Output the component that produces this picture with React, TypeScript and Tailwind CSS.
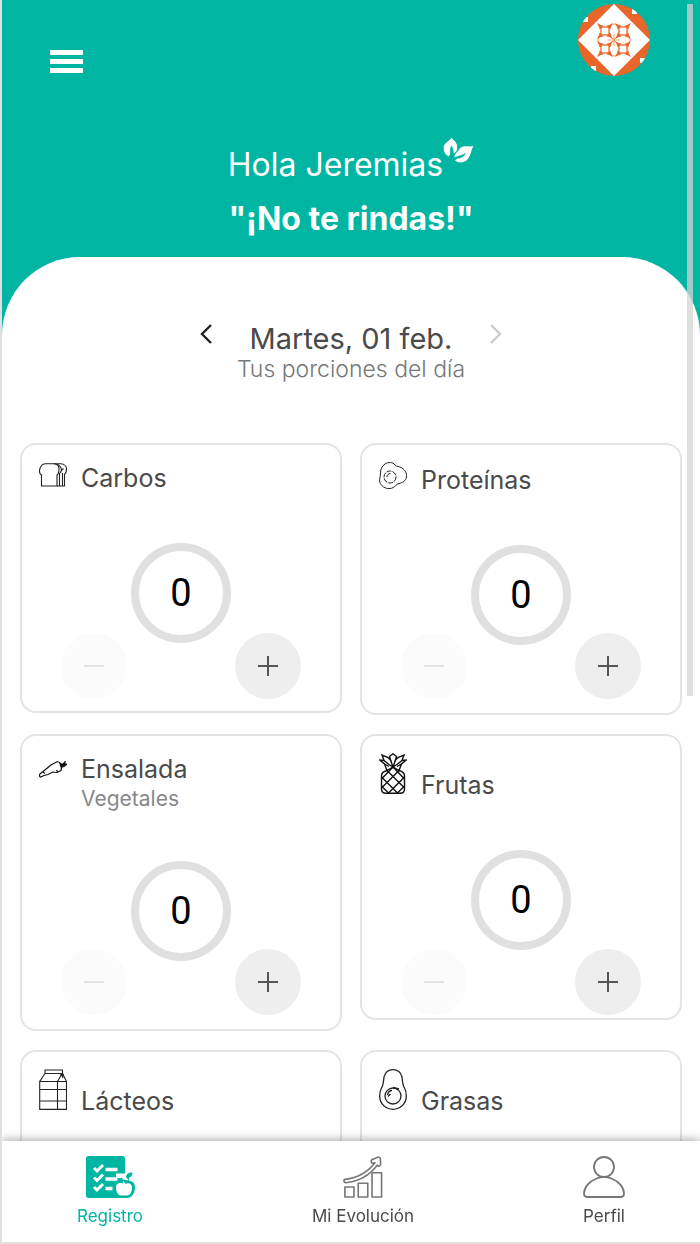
import React, { useState } from 'react';

interface IconProps {
  className?: string;
}

const LeafIcon: React.FC<IconProps> = ({ className }) => (
  <svg viewBox="0 0 31 26" className={className} fill="currentColor" aria-hidden="true">
    <path d="M9 .5C9.500 3 13 4 14 8C14.400 10 14.200 12 13.500 14L11 16.500L10.500 14.500L9 8.500L7.300 10.500L7 17.500L5.500 19.500C2 17.500 .3 14 .6 10C1.500 5.500 6.500 4 9 .5Z" />
    <path d="M30.500 9C28 12 28.500 19 23.500 23.500C20 26 15.500 26 12 23.500L14.500 21.500C18.500 21.500 21.500 19.500 23 16C19.500 18 16 18.500 12.500 20L11.200 19.500C12 17 14 15 15.500 13.500C17 10 20 9 23.500 9.300C26 9.500 28 9.500 30.500 9Z" />
  </svg>
);

const Avatar: React.FC = () => (
  <svg viewBox="0 0 72 72" className="size-full" role="img" aria-label="Jeremias">
    <rect width="72" height="72" fill="#e8662a" />
    <path d="M36 0L72 36L36 72L0 36Z" fill="#fff" />
    <path d="M54 4L59 4V10H54ZM4 13H10V18H4ZM62 54H68V59H62ZM13 62H18V68H13Z" fill="#fff" />
    <g fill="none" stroke="#f0925f" strokeWidth=".9">
      <path d="M32 22A5 5 0 0 1 40 22M32 50A5 5 0 0 0 40 50M22 32A5 5 0 0 0 22 40M50 32A5 5 0 0 1 50 40" />
      <path d="M32 32L40 40M40 32L32 40M30 36H42M36 30V42" />
    </g>
    {[[27, 27], [45, 27], [27, 45], [45, 45]].map(([x, y]) => (
      <g key={`${x}-${y}`} transform={`translate(${x} ${y})`} fill="#e8662a">
        <rect x="-4" y="-4" width="8" height="8" fill="none" stroke="#e8662a" strokeWidth="1.300" />
        <path d="M-8-8L-2-5L-5-2ZM8-8L2-5L5-2ZM8 8L2 5L5 2ZM-8 8L-2 5L-5 2Z" />
        <path d="M-5.500-5.500H-1.500L-5.500-1.500ZM5.500-5.500V-1.500L1.500-5.500ZM5.500 5.500H1.500L5.500 1.500ZM-5.500 5.500V1.500L-1.500 5.500Z" />
      </g>
    ))}
  </svg>
);

const BreadIcon: React.FC = () => (
  <svg viewBox="0 0 28 24" className="h-6 w-7" fill="none" stroke="#222" strokeWidth="1.100" aria-hidden="true">
    <path d="M2.500 23V12C.5 11 .3 8 .8 6C1.800 3 4 1 6 .8H15C18 1 20 3 20 6C20 9 19.500 11 18 12V23Z" />
    <path d="M15 .8H22C25 1 27.500 3 27.500 6C27.500 9 27 10.500 25.500 11.500V23H18M18 1.500C21 2.500 22.500 4 22.500 7.500L20.500 11V23M23.500 10V23M22 7.500L24.500 5.500" />
  </svg>
);

const EggIcon: React.FC = () => (
  <svg viewBox="0 0 28 27" className="h-[27px] w-7" fill="none" stroke="#222" strokeWidth="1" aria-hidden="true">
    <path d="M6 2C9 0 14-.2 16 3C18 5 20 4 23 6C26 8 28 11 27.500 15C27 19 23 21 20 21.500C17 22 16 26 11 26.500C6 27 2 24 .8 20C0 17 1.500 15 1.500 11C1.500 7 3 4 6 2Z" />
    <circle cx="11" cy="15" r="6" strokeDasharray="5 1" />
    <path d="M8 15C8 13 9.500 11.500 11.500 11.500" />
  </svg>
);

const CarrotIcon: React.FC = () => (
  <svg viewBox="0 0 28 17" className="h-[17px] w-7" fill="none" stroke="#111" strokeWidth="1.200" aria-hidden="true">
    <path d="M1.500 16C0 15.500 .2 13.500 1.500 12.500L12 4L18 .8C20 .5 22 2.500 23 5L22 9.500L18 11.500L14 11L9 13.500L5 14.500Z" />
    <path d="M4 11L6 12.500M18.500 11L17.500 9" />
    <path d="M21 2.500L23.500 3.500L26 .8L25.500 3L28 3L25 5.500L22 6Z" fill="#111" />
  </svg>
);

const PineappleIcon: React.FC = () => (
  <svg viewBox="0 0 28 41" className="h-[41px] w-7" fill="none" stroke="#111" strokeWidth="1.400" aria-hidden="true">
    <path d="M8 17.500C4 18.500 2.500 20 2.500 23V36C2.500 39 4 40.300 7 40.300H21C24 40.300 25.500 39 25.500 36V23C25.500 20 24 18.500 20 17.500" />
    <path d="M8 17.500L5.500 11L.8 7L5 7.500L3 2L9 4.500L11.500 7L10.500 3.500L14 .8L17.500 3.500L16.500 7L19 4.500L25 2L23 7.500L27.200 7L22.500 11L20 17.500L14 14Z" />
    <path d="M5 7.500L10 11.500L14 14L18 11.500L23 7.500M11.500 7L14 14L16.500 7M5.500 11L10 13.500M22.500 11L18 13.500" />
    <path d="M14 14L2.500 26M8 17.500L25.500 35M2.500 24L18.500 40M14 14L25.500 26M20 17.500L2.500 35M25.500 24L9.500 40M2.500 33L9.500 40M25.500 33L18.500 40" />
  </svg>
);

const MilkIcon: React.FC = () => (
  <svg viewBox="0 0 28 41" className="h-[41px] w-7" fill="none" stroke="#222" strokeWidth="1.100" aria-hidden="true">
    <path d="M6 1H23.500V4.500H6ZM6 4.500L.7 12.500V40.400H27.500V12.500L23.500 4.500M.7 12.500H18.500L23 4.500M18.500 12.500V40.400M18.500 12.500H27.500M.7 20.500H27.500M.7 32H27.500M22.500 5L24 9" />
    <circle cx="23" cy="5.500" r="1" fill="#111" />
  </svg>
);

const AvocadoIcon: React.FC = () => (
  <svg viewBox="0 0 28 41" className="h-[41px] w-7" fill="none" stroke="#222" strokeWidth="1.300" aria-hidden="true">
    <path d="M14 .7C9 .7 6 4 5 8C4.500 12 4.500 16 2.500 19C1 21.500 .7 24 .7 27C.7 35 7 40.300 14 40.300C21 40.300 27.300 35 27.300 27C27.300 24 27 21.500 25.500 19C23.500 16 23.500 12 23 8C22 4 19 .7 14 .7Z" />
    <circle cx="14" cy="27" r="8" />
    <path d="M8.500 26C9 23.500 11 21.500 13 21.500M9 27.500L11.500 25M14 18.500L20 20" />
  </svg>
);

const ChecklistIcon: React.FC = () => (
  <svg viewBox="0 0 49 42" className="h-[42px] w-[49px]" fill="none" aria-hidden="true">
    <path d="M2.500 0H36.500C38 0 39 1 39 2.500V17.500H30V42H2.500C1 42 0 41 0 39.500V2.500C0 1 1 0 2.500 0Z" fill="currentColor" />
    <path d="M40 22C40 18 42 16.500 46.500 16.500C46.500 19 45.500 20.500 43 22V25C47 24.500 49 27.500 49 31.500C49 37 45.500 42 41 42H26V22H40Z" fill="currentColor" />
    <path d="M37.500 28C36 26.500 30 26.500 30 31C30 35 31.500 39.500 35 39.500H41C44.500 39.500 46 35 46 31.500C46 27 41 26.500 39.500 28L38 25.500H36.500Z" fill="#fff" />
    <path d="M39 19L39.500 22L42 24M36.500 22.500L41 23.500" stroke="#fff" strokeWidth="1.500" />
    <path d="M8 12L11 15L17 9M8 21.500L11 24.500L17 18.500M8 31L11 34L17 28" stroke="#fff" strokeWidth="3" />
    <path d="M19.500 13.500H31.500M19.500 23H31.500M19.500 32.500H26.500" stroke="#fff" strokeWidth="3.500" />
  </svg>
);

const ChartIcon: React.FC = () => (
  <svg viewBox="0 0 42 44" className="h-[42px] w-10" fill="none" stroke="currentColor" strokeWidth="1.700" strokeLinejoin="round" aria-hidden="true">
    <path d="M2 32.500H11.500V43H2ZM16 28.500H26V43H16ZM30.500 17.500H40.500V43H30.500Z" />
    <path d="M2 24.500C14 23 26 17 33.500 7L30.500 7.500C29 6 29.500 4 31 3.500L36.500 1.200C38 .8 39 1.500 39.200 3L39.500 9C39 11 37 11 36.200 9.500C28 20 16 27 3 28C.5 28 .5 25 2 24.500Z" />
  </svg>
);

const ProfileIcon: React.FC = () => (
  <svg viewBox="0 0 42 42" className="size-[42px]" fill="none" stroke="currentColor" strokeWidth="1.800" aria-hidden="true">
    <circle cx="21" cy="11" r="10" />
    <path d="M13.500 22.500C6 25.500 1 31.500 1 37.500C1 40 2 41 4 41H38C40 41 41 40 41 37.500C41 31.500 36 25.500 28.500 22.500C24 20.500 18 20.500 13.500 22.500Z" />
  </svg>
);

interface Food {
  id: string;
  name: string;
  detail?: string;
  icon: React.ReactNode;
}

const FOODS: Food[] = [
  { id: 'carbos', name: 'Carbos', icon: <BreadIcon /> },
  { id: 'proteinas', name: 'Proteínas', icon: <EggIcon /> },
  { id: 'ensalada', name: 'Ensalada', detail: 'Vegetales', icon: <CarrotIcon /> },
  { id: 'frutas', name: 'Frutas', icon: <PineappleIcon /> },
  { id: 'lacteos', name: 'Lácteos', icon: <MilkIcon /> },
  { id: 'grasas', name: 'Grasas', icon: <AvocadoIcon /> },
];

const TABS = [
  { id: 'registro', label: 'Registro', icon: <ChecklistIcon /> },
  { id: 'evolucion', label: 'Mi Evolución', icon: <ChartIcon /> },
  { id: 'perfil', label: 'Perfil', icon: <ProfileIcon /> },
];

const FoodCard: React.FC<{ food: Food }> = ({ food }) => {
  const [count, setCount] = useState(0);

  return (
    <div className="grid">
      <article className="col-start-1 row-start-1 self-start rounded-2xl border-2 border-[#e4e4e4] px-[17px] pt-[17px] pb-[68px]">
        <div className="flex items-baseline gap-[14px]">
          {food.icon}
          <div>
            <h2 className="text-[25px] leading-8 text-[#4a4a4a]">{food.name}</h2>
            {food.detail && <p className="text-[21px] leading-[27px] text-[#888]">{food.detail}</p>}
          </div>
        </div>
        <div className="mx-auto mt-[49px] flex size-[100px] items-center justify-center rounded-full border-8 border-[#e0e0e0] font-['Roboto',sans-serif] text-[38px] leading-none text-black">
          {count}
        </div>
      </article>

      {/* Buttons stay on the row's bottom line, whatever the card's height */}
      <div className="col-start-1 row-start-1 mb-4 flex justify-between self-end px-[41px]">
        <button
          type="button"
          aria-label={`Quitar ${food.name}`}
          disabled={count === 0}
          onClick={() => setCount(count - 1)}
          className="flex size-[66px] items-center justify-center rounded-full bg-[#eee] text-[#555] disabled:bg-[#fbfbfb] disabled:text-[#e4e4e4]"
        >
          <svg viewBox="0 0 20 20" className="size-5" stroke="currentColor" strokeWidth="2">
            <path d="M0 10H20" />
          </svg>
        </button>
        <button
          type="button"
          aria-label={`Agregar ${food.name}`}
          onClick={() => setCount(count + 1)}
          className="flex size-[66px] items-center justify-center rounded-full bg-[#eee] text-[#555]"
        >
          <svg viewBox="0 0 20 20" className="size-5" stroke="currentColor" strokeWidth="2">
            <path d="M0 10H20M10 0V20" />
          </svg>
        </button>
      </div>
    </div>
  );
};

export default function App() {
  const [tab, setTab] = useState('registro');

  return (
    <div className="relative flex h-screen flex-col overflow-hidden border-b-2 border-l-2 border-[#e0e0e0] bg-white font-['Inter',sans-serif]">
      <main className="min-h-0 flex-1 overflow-y-auto bg-[#00b5a2] [scrollbar-width:none]">
        <header className="pb-[18px] text-white">
          <div className="flex items-start justify-between px-12 pt-1">
            <button type="button" aria-label="Menú" className="mt-[46px] flex w-[33px] flex-col gap-1">
              <span className="h-[5px] bg-white" />
              <span className="h-[5px] bg-white" />
              <span className="h-[5px] bg-white" />
            </button>
            <div className="mr-0.5 size-[72px] overflow-hidden rounded-full">
              <Avatar />
            </div>
          </div>
          <div className="mt-[61px] flex items-start justify-center">
            <p className="mt-2 text-[32px] leading-10">Hola Jeremias</p>
            <LeafIcon className="h-[26px] w-[31px]" />
          </div>
          <h1 className="mt-[14px] text-center text-[32px] leading-10 font-bold">"¡No te rindas!"</h1>
        </header>

        <section className="rounded-t-[78px] bg-white px-[18px] pt-[65px] pb-5">
          <div className="flex items-start justify-center gap-[38px]">
            <button type="button" aria-label="Día anterior" className="mt-[2px] text-[#222]">
              <svg viewBox="0 0 12 20" className="h-5 w-3" fill="none" stroke="currentColor" strokeWidth="2.400">
                <path d="M11 1L2 10L11 19" />
              </svg>
            </button>
            <time className="text-[29px] leading-[34px] text-[#4a4a4a]">Martes, 01 feb.</time>
            <button type="button" aria-label="Día siguiente" disabled className="mt-[2px] text-[#ccc]">
              <svg viewBox="0 0 12 20" className="h-5 w-3" fill="none" stroke="currentColor" strokeWidth="2.400">
                <path d="M1 1L10 10L1 19" />
              </svg>
            </button>
          </div>
          <p className="text-center text-[23px] leading-[27px] font-light text-[#777]">Tus porciones del día</p>

          <div className="mt-[60px] grid grid-cols-2 gap-x-[18px] gap-y-[19px]">
            {FOODS.map(food => (
              <FoodCard key={food.id} food={food} />
            ))}
          </div>
        </section>
      </main>

      <nav className="relative flex justify-between bg-white px-[75px] pt-[15px] pb-[15px] shadow-[0_-2px_8px_rgba(0,0,0,0.3)]">
        {TABS.map(t => (
          <button
            key={t.id}
            type="button"
            onClick={() => setTab(t.id)}
            className={`flex flex-col items-center gap-[7px] ${tab === t.id ? 'text-[#00b5a2]' : 'text-[#777]'}`}
          >
            {t.icon}
            <span className={`text-[17px] leading-[22px] ${tab === t.id ? '' : 'text-[#4a4a4a]'}`}>{t.label}</span>
          </button>
        ))}
      </nav>

      {/* Scroll thumb */}
      <div className="absolute top-1 right-[7px] h-[692px] w-[6px] bg-[#d4d4d4]/75" />
    </div>
  );
}
